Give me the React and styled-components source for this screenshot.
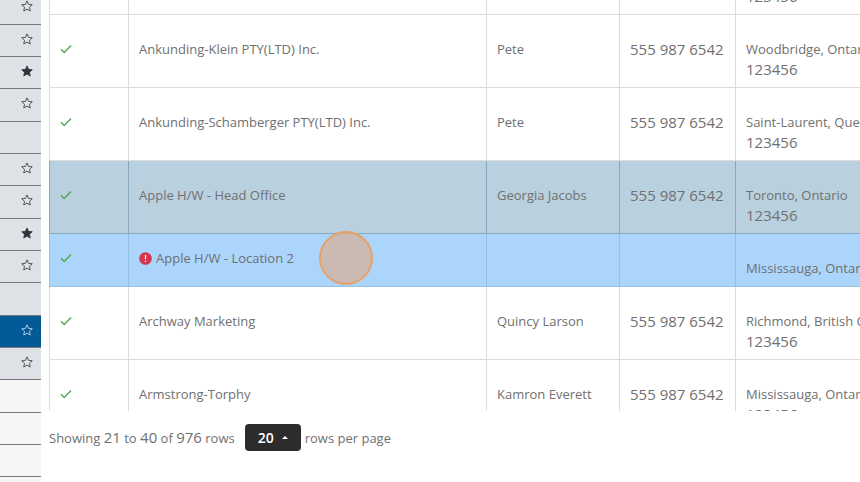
import React from "react";
import styled, { createGlobalStyle } from "styled-components";

const favorites = [
  { star: "empty" },
  { star: "empty" },
  { star: "full" },
  { star: "empty" },
  {},
  { star: "empty" },
  { star: "empty" },
  { star: "full" },
  { star: "empty" },
  {},
  { star: "empty", active: true },
  { star: "empty" },
  { blank: true },
  { blank: true },
  { blank: true },
  { blank: true },
];

const customers = [
  { name: "", contact: "", phone: "", city: "", code: "123456" },
  {
    name: "Ankunding-Klein PTY(LTD) Inc.",
    contact: "Pete",
    phone: "555 987 6542",
    city: "Woodbridge, Ontario",
    code: "123456",
  },
  {
    name: "Ankunding-Schamberger PTY(LTD) Inc.",
    contact: "Pete",
    phone: "555 987 6542",
    city: "Saint-Laurent, Quebec",
    code: "123456",
  },
  {
    name: "Apple H/W - Head Office",
    contact: "Georgia Jacobs",
    phone: "555 987 6542",
    city: "Toronto, Ontario",
    code: "123456",
    tone: "selected",
  },
  {
    name: "Apple H/W - Location 2",
    contact: "",
    phone: "",
    city: "Mississauga, Ontario",
    tone: "hovered",
    alert: true,
  },
  {
    name: "Archway Marketing",
    contact: "Quincy Larson",
    phone: "555 987 6542",
    city: "Richmond, British Columbia",
    code: "123456",
  },
  {
    name: "Armstrong-Torphy",
    contact: "Kamron Everett",
    phone: "555 987 6542",
    city: "Mississauga, Ontario",
    code: "123456",
  },
];

const tones = {
  selected: { background: "#b9d0de", line: "#86a9bf" },
  hovered: { background: "#abd5fb", line: "#98c0e4" },
};

function Star({ full }) {
  return (
    <StarIcon viewBox="0 0 24 24" $full={full} aria-hidden="true">
      <path d="M12 1.8l3.1 6.9 7.4.8-5.5 5.1 1.5 7.4-6.5-3.8L5.5 22 7 14.6 1.5 9.5l7.4-.8z" />
    </StarIcon>
  );
}

export default function App() {
  return (
    <Page>
      <GlobalStyle />
      <Sidebar>
        {favorites.map((item, i) => (
          <SideItem key={i} $active={item.active} $blank={item.blank}>
            {item.star && (
              <StarButton aria-label="Favorite" $active={item.active}>
                <Star full={item.star === "full"} />
              </StarButton>
            )}
          </SideItem>
        ))}
      </Sidebar>
      <Main>
        <TableArea>
          <Table>
            <colgroup>
              <Col $width="79px" />
              <Col $width="358px" />
              <Col $width="133px" />
              <Col $width="116px" />
              <Col />
            </colgroup>
            <tbody>
              {customers.map((customer, i) => (
                <Row key={i} $tone={tones[customer.tone]}>
                  <Cell>
                    <CheckIcon viewBox="0 0 12 10" aria-hidden="true">
                      <path d="M1 5.2l3.2 3.3L11 1.5" />
                    </CheckIcon>
                  </Cell>
                  <Cell>
                    <Name>
                      {customer.alert && (
                        <AlertIcon viewBox="0 0 14 14" aria-hidden="true">
                          <circle cx="7" cy="7" r="6.8" fill="#d5354d" />
                          <path d="M7 3.2v4.6M7 9.4v1.5" stroke="#fff" strokeWidth="1.3" />
                        </AlertIcon>
                      )}
                      {customer.name}
                      {customer.alert && <ClickMarker />}
                    </Name>
                  </Cell>
                  <Cell>{customer.contact}</Cell>
                  <Cell>
                    <Digits>{customer.phone}</Digits>
                  </Cell>
                  <Cell>
                    <AddressLine />
                    <AddressLine>{customer.city}</AddressLine>
                    {customer.code && (
                      <AddressLine>
                        <Digits>{customer.code}</Digits>
                      </AddressLine>
                    )}
                  </Cell>
                </Row>
              ))}
            </tbody>
          </Table>
        </TableArea>
        <Pagination>
          <span>
            Showing <Digits>21</Digits> to <Digits>40</Digits> of{" "}
            <Digits>976</Digits> rows
          </span>
          <PageSize type="button">
            20
            <Caret />
          </PageSize>
          <span>rows per page</span>
        </Pagination>
      </Main>
    </Page>
  );
}

const GlobalStyle = createGlobalStyle`
  * {
    box-sizing: border-box;
  }
  body {
    margin: 0;
    background: #fff;
    color: #707070;
    font-family: "Open Sans", "Noto Sans", sans-serif;
    font-size: 13px;
    line-height: 20px;
  }
`;
const Page = styled.div`
  display: flex;
  height: 100vh;
  overflow: hidden;
`;
const Sidebar = styled.aside`
  flex: 0 0 41px;
  margin-top: -8px;
`;
const SideItem = styled.div`
  display: flex;
  align-items: center;
  justify-content: flex-end;
  height: 32px;
  padding: 0 8px 4px 0;
  border-bottom: 1px solid #77797d;
  background: ${(props) =>
    props.$active ? "#035a97" : props.$blank ? "#f6f6f7" : "#dee1e6"};

  &:nth-child(3n + 1) {
    height: 33px;
  }
`;
const StarButton = styled.button`
  display: flex;
  padding: 0;
  border: 0;
  background: none;
  color: ${(props) => (props.$active ? "#d5e6f3" : "#30343a")};
`;
const StarIcon = styled.svg`
  width: 12px;
  height: 12px;
  stroke: currentColor;
  stroke-width: 1.6;
  fill: ${(props) => (props.$full ? "currentColor" : "none")};
`;
const Main = styled.main`
  flex: 1;
  min-width: 0;
  display: flex;
  flex-direction: column;
  padding-left: 8px;
`;
const TableArea = styled.div`
  flex: 1;
  min-height: 0;
  overflow: hidden;
`;
const Table = styled.table`
  width: 100%;
  margin-top: -58px;
  table-layout: fixed;
  border-collapse: separate;
  border-spacing: 0;
`;
const Col = styled.col`
  width: ${(props) => props.$width || "auto"};
`;
const Cell = styled.td`
  padding: 4px 10px 8px;
  border-left: 1px solid #dcdcdc;
  border-bottom: 1px solid #dcdcdc;
  vertical-align: middle;
  white-space: nowrap;
`;
const Row = styled.tr`
  background: ${(props) => (props.$tone ? props.$tone.background : "#fff")};

  ${Cell} {
    border-color: ${(props) => (props.$tone ? props.$tone.line : "#dcdcdc")};
  }
`;
const Name = styled.div`
  position: relative;
  display: flex;
  align-items: center;
  gap: 4px;
`;
const Digits = styled.span`
  font-size: 15px;
`;
const AddressLine = styled.div`
  height: 20px;
`;
const CheckIcon = styled.svg`
  display: block;
  width: 12px;
  height: 10px;
  fill: none;
  stroke: #55a950;
  stroke-width: 1.5;
`;
const AlertIcon = styled.svg`
  width: 13px;
  height: 13px;
`;
const ClickMarker = styled.span`
  position: absolute;
  top: -17px;
  left: 180px;
  width: 54px;
  height: 54px;
  border: 2px solid #e9a066;
  border-radius: 50%;
  background: rgba(217, 174, 145, 0.7);
`;
const Pagination = styled.div`
  display: flex;
  align-items: center;
  height: 71px;
  padding-bottom: 18px;
`;
const PageSize = styled.button`
  display: flex;
  align-items: center;
  gap: 8px;
  height: 27px;
  margin: 0 4px 0 10px;
  padding: 0 13px;
  border: 0;
  border-radius: 4px;
  background: #2c2c2c;
  color: #fff;
  font: 600 14px "Open Sans", sans-serif;
`;
const Caret = styled.span`
  border: 3px solid transparent;
  border-top: 0;
  border-bottom-color: #fff;
`;
